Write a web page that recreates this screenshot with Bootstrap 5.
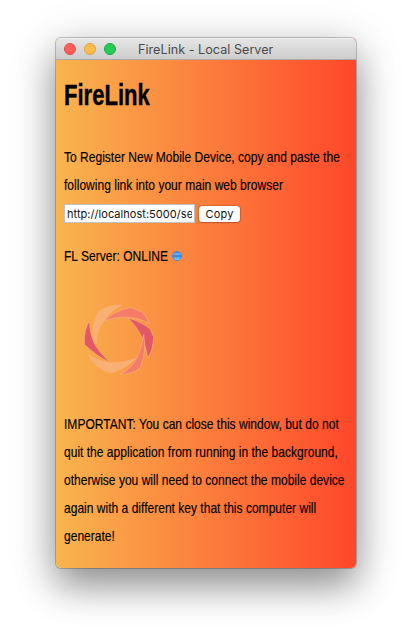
<!DOCTYPE html>
<html lang="en">
<head>
<meta charset="utf-8">
<meta name="viewport" content="width=device-width, initial-scale=1">
<title>FireLink - Local Server</title>
<link href="https://cdn.jsdelivr.net/npm/bootstrap@5.3.0/dist/css/bootstrap.min.css" rel="stylesheet">
<style>
body { background: #fff; color: #000; }
.stage { height: 642px; padding: 38px 56px 73px; }
.app-window { width: 300px; height: 530px; border-radius: 5px; box-shadow: 0 0 0 1px rgba(0,0,0,.22), 0 18px 36px rgba(0,0,0,.36), 0 8px 50px rgba(0,0,0,.17); background: linear-gradient(90deg, #f8b54e, #ff472a); }
.titlebar { height: 22px; background: linear-gradient(#e6e6e6, #cdcdcd); border-bottom: 1px solid #aeaaa7; box-shadow: inset 0 1px #f3f3f3; padding: 1px 8px 0; }
.light { width: 12px; height: 12px; border: 1px solid; }
.light-close { background: #fe5f5b; border-color: #e64a47; }
.light-min { background: #fdbd4d; border-color: #e2a33c; }
.light-zoom { background: #26ca56; border-color: #14ac38; }
.window-title { font: 12.6px/20px Inter, sans-serif; color: #4b4b4b; margin: 1px 0 0 22px; letter-spacing: .03px; }
.content { padding: 0 8px; font-family: "Liberation Sans", sans-serif; font-size: 15px; line-height: 28px; }
.narrow { display: block; width: max-content; white-space: nowrap; transform: scaleX(.803); transform-origin: 0 0; -webkit-text-stroke: .15px #000; }
.app-name { font-size: 29px; font-weight: 700; line-height: 36px; margin: 17px 0 30px; }
.app-name .narrow { transform: scaleX(.76); -webkit-text-stroke: .4px #000; }
.link-row { padding-top: 5px; height: 24px; }
.link-field { width: 131px; height: 19px; border: 1px solid #c2c2c2; border-radius: 0; padding: 0 2px; font: 11px/16px Inter, sans-serif; letter-spacing: .04px; color: #111; background: #fff; }
.copy-btn { width: 41px; height: 16px; border: 0; border-radius: 3.5px; padding: 0; font: 11px/16px Inter, sans-serif; letter-spacing: .2px; color: #111; background: #fff; box-shadow: 0 0 1px 0.5px rgba(0,0,0,.16), 0 1px 1px rgba(0,0,0,.15); margin-top: 1px; }
.status-row { margin-top: 19px; height: 28px; }
.status-text { width: 108px; }
.status-dot { width: 10px; height: 10px; background: linear-gradient(#3f86ee 0, #6db4fa 30%, #2d78e8 48%, #55b4fa 75%, #8fe0ff 100%); border: 1px solid #4f7fc8; }
.swirl { margin: 26px 0 0 16px; }
.notice { margin: 28px 0 0; }
</style>
</head>
<body>
<div class="stage">
  <main class="app-window overflow-hidden">
    <header class="titlebar d-flex align-items-center">
      <div class="d-flex gap-2">
        <span class="light light-close rounded-circle"></span>
        <span class="light light-min rounded-circle"></span>
        <span class="light light-zoom rounded-circle"></span>
      </div>
      <span class="window-title">FireLink - Local Server</span>
    </header>
    <div class="content">
      <h1 class="app-name"><span class="narrow">FireLink</span></h1>
      <p class="mb-0">
        <span class="narrow">To Register New Mobile Device, copy and paste the</span>
        <span class="narrow">following link into your main web browser</span>
      </p>
      <div class="d-flex align-items-center link-row">
        <input class="link-field form-control" type="text" value="http://localhost:5000/setup" aria-label="Link" readonly>
        <button class="copy-btn btn ms-1" type="button">Copy</button>
      </div>
      <div class="d-flex align-items-center status-row">
        <div class="status-text"><span class="narrow">FL Server: ONLINE</span></div>
        <span class="status-dot rounded-circle"></span>
      </div>
      <svg class="swirl d-block" width="80" height="86" viewBox="12 0 240 258" stroke="#fcb47c" stroke-width="2" stroke-linejoin="round" aria-hidden="true">
        <path fill="#f8b074" d="M137 27Q98 26 66 48Q46 90 54 128L61 142Q60 105 83 75Q100 45 137 27Z"/>
        <path fill="#f47c68" d="M83 75Q115 44 165 34L200 49Q213 63 222 83Q195 70 175 66Q130 58 83 75Z"/>
        <path fill="#e35865" d="M155 65Q195 77 222 98L233 122Q232 160 215 187Q211 153 198 125Q186 96 155 65Z"/>
        <path fill="#f47c68" d="M203 115Q212 172 193 215Q168 236 132 235Q166 218 182 187Q196 160 203 115Z"/>
        <path fill="#f8b074" d="M38 178Q75 199 105 201Q145 201 180 187Q152 216 105 231Q60 220 38 178Z"/>
        <path fill="#e35865" d="M40 75Q23 102 25 145Q60 180 104 201Q67 167 53 138Q41 109 40 75Z"/>
      </svg>
      <p class="notice">
        <span class="narrow">IMPORTANT: You can close this window, but do not</span>
        <span class="narrow">quit the application from running in the background,</span>
        <span class="narrow">otherwise you will need to connect the mobile device</span>
        <span class="narrow">again with a different key that this computer will</span>
        <span class="narrow">generate!</span>
      </p>
    </div>
  </main>
</div>
<script src="https://cdn.jsdelivr.net/npm/bootstrap@5.3.0/dist/js/bootstrap.bundle.min.js"></script>
</body>
</html>
